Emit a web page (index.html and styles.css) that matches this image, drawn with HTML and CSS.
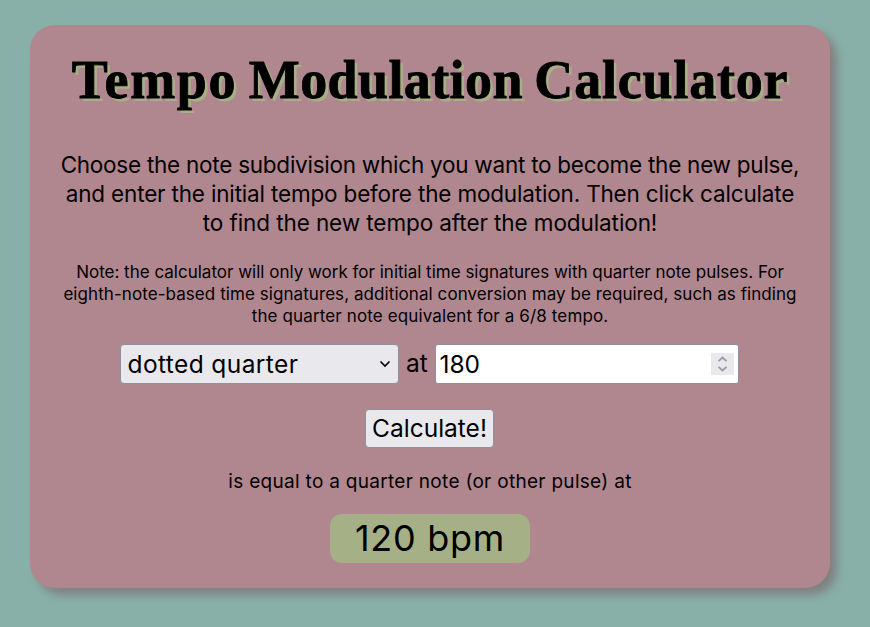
FILE: index.html
```html
<!DOCTYPE html>
<html lang="en">
<head>
<meta charset="utf-8">
<title>Tempo Modulation Calculator</title>
<link rel="stylesheet" href="styles.css">
</head>
<body>
<main class="card">
  <h1 class="title"><span class="t1">Tempo</span> <span class="t2">Modulation</span> <span class="t3">Calculator</span></h1>
  <p class="intro"><span class="i1">Choose the note subdivision which you want to become the new pulse,</span><br><span class="i2">and enter the initial tempo before the modulation. Then click calculate</span><br><span class="i3">to find the new tempo after the modulation!</span></p>
  <p class="note"><span class="n1">Note: the calculator will only work for initial time signatures with quarter note pulses. For</span><br><span class="n2">eighth-note-based time signatures, additional conversion may be required, such as finding</span><br><span class="n3">the quarter note equivalent for a 6/8 tempo.</span></p>
  <div class="controls">
    <div class="select"><span class="choice">dotted quarter</span><svg class="chevron" width="12" height="8" viewBox="0 0 12 8"><path d="M1.500 1.500 6 6l4.500-4.500" fill="none" stroke="#000" stroke-width="1.600"/></svg></div>
    <span class="at">at</span>
    <div class="number"><span class="value">180</span><svg class="spinner" width="23" height="22" viewBox="0 0 23 22"><path d="M0 0h23v22H0z" fill="#e9e9ed"/><path d="M7.500 8.200 11.500 4.500l4 3.700M7.500 13.800l4 3.700 4-3.700" fill="none" stroke="#9a99a5" stroke-width="1.800"/></svg></div>
  </div>
  <button class="calculate">Calculate!</button>
  <p class="equal">is equal to a quarter note (or other pulse) at</p>
  <div class="result">120 bpm</div>
</main>
</body>
</html>
```
FILE: styles.css
```css
* { box-sizing: border-box; }
body {
  margin: 0;
  padding: 25px 40px 0 30px;
  min-height: 627px;
  background: #88b0a8;
  color: #000;
  font-family: Inter, sans-serif;
}
.card {
  width: 800px;
  height: 563px;
  display: flex;
  flex-direction: column;
  align-items: center;
  background: #b0868f;
  border-radius: 25px;
  box-shadow: 7px 7px 10px #808080;
  text-align: center;
  white-space: nowrap;
}
.title {
  margin: 20px 0 0;
  height: 70px;
  font: bold 54px/70px "Liberation Serif", serif;
  word-spacing: -2px;
  -webkit-text-stroke: 0.8px #000;
  text-shadow: 3px 3px #a5b086;
}
.t1 { letter-spacing: 1.7px; }
.t2 { letter-spacing: 0.4px; }
.t3 { letter-spacing: 0.8px; }
.intro { margin: 35px 0 0; font-size: 22.5px; line-height: 29px; }
.i1 { letter-spacing: -0.25px; }
.i2 { letter-spacing: -0.17px; }
.i3 { letter-spacing: -0.09px; }
.note { margin: 24px 0 0; font-size: 17px; line-height: 22px; }
.n2 { letter-spacing: 0.07px; }
.n3 { letter-spacing: 0.13px; }
.controls { display: flex; margin: 17px 2px 0 0; font-size: 24.5px; }
.select, .number {
  display: flex;
  align-items: center;
  justify-content: space-between;
  height: 40px;
  border: 1px solid #8f8f9d;
  border-radius: 4px;
}
.select { width: 279px; padding: 0 7px; background: #e9e9ed; }
.number { width: 304px; padding: 0 4px; background: #fff; border-radius: 3px; }
.choice, .value { line-height: 36px; padding-bottom: 1px; }
.choice { letter-spacing: 0.4px; }
.at { width: 36px; padding-left: 1px; line-height: 39px; }
.calculate {
  margin: 25px 1px 0 0;
  padding: 0;
  width: 129px;
  height: 39px;
  border: 1px solid #8f8f9d;
  border-radius: 4px;
  background: #e9e9ed;
  color: #000;
  font: 24.5px/37px Inter, sans-serif;
}
.equal { margin: 21px 0 0; font-size: 19px; line-height: 26px; letter-spacing: 0.3px; }
.result {
  margin-top: 19px;
  width: 200px;
  height: 49px;
  border-radius: 12px;
  background: #a5b086;
  font-size: 36px;
  line-height: 49px;
  letter-spacing: 0.7px;
}
```
